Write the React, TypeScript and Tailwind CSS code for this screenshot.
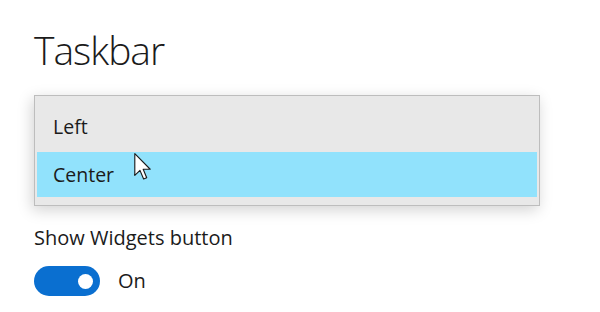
import React from 'react';

function Cursor() {
  return (
    <svg
      width="17"
      height="28"
      viewBox="0 0 12 20"
      className="absolute left-[97px] top-[1px] pointer-events-none"
    >
      <path
        d="M0.5 0.5 L0.5 16 L4.2 12.4 L6.8 18.6 L9 17.7 L6.5 11.6 L11.5 11.6 Z"
        fill="#ffffff"
        stroke="#1a1a1a"
        strokeWidth="0.8"
        strokeLinejoin="round"
      />
    </svg>
  );
}

export default function App() {
  const options = ['Left', 'Center'];
  const selected = 'Center';

  return (
    <div
      className="w-[600px] h-[312px] bg-white pl-[34px] pt-[25px] overflow-hidden text-[#1b1b1b]"
      style={{ fontFamily: '"Open Sans", "Noto Sans", sans-serif' }}
    >
      {/* Title */}
      <h1 className="text-[39px] leading-[50px] font-light tracking-[-1px]">Taskbar</h1>

      {/* Alignment dropdown (open) */}
      <div className="mt-[20px] w-[506px] border border-[#bdbdbd] bg-[#e8e8e8] px-[2px] py-[8px] flex flex-col gap-[3px] shadow-[-2px_4px_14px_rgba(0,0,0,0.18)]">
        {options.map((opt) => (
          <div
            key={opt}
            className={`relative h-[45px] flex items-center pl-[16px] text-[19.5px] ${
              opt === selected ? 'bg-[#91e2fc]' : ''
            }`}
          >
            {opt}
            {opt === selected && <Cursor />}
          </div>
        ))}
      </div>

      {/* Widgets toggle */}
      <div className="mt-[20px] text-[20px] leading-[24px]">Show Widgets button</div>
      <div className="mt-[16px] flex items-center gap-[18px]">
        <div className="w-[66px] h-[30px] rounded-full bg-[#0a6fd0] flex items-center justify-end pr-[7px]">
          <div className="w-[15px] h-[15px] rounded-full bg-white" />
        </div>
        <span className="text-[20px]">On</span>
      </div>
    </div>
  );
}
